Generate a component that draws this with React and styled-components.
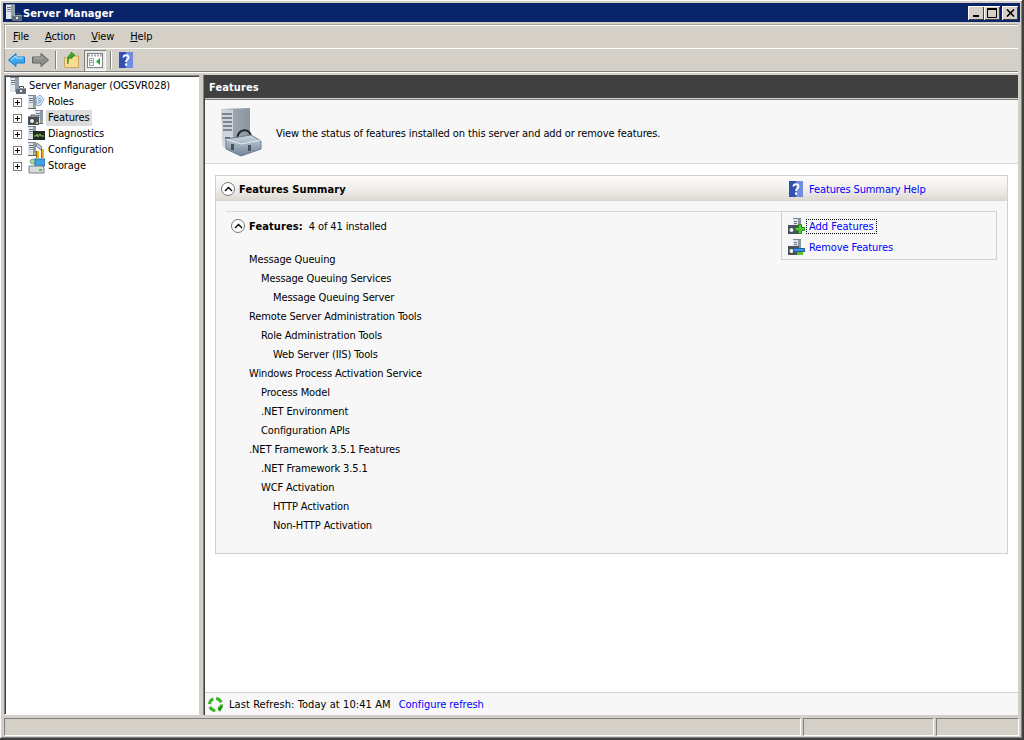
import React from 'react';
import styled, { createGlobalStyle } from 'styled-components';

const FONT = `"DejaVu Sans Condensed", "DejaVu Sans", sans-serif`;

const GlobalStyle = createGlobalStyle`
	html, body {
		margin: 0;
		padding: 0;
		background: #d4d0c8;
	}
	body {
		font-family: ${FONT};
		font-size: 11px;
		letter-spacing: -0.12px;
		color: #000;
	}
	strong {
		letter-spacing: 0.1px;
	}
`;

const treeItems = [
	{ label: 'Roles', icon: 'roles' },
	{ label: 'Features', icon: 'features', selected: true },
	{ label: 'Diagnostics', icon: 'diagnostics' },
	{ label: 'Configuration', icon: 'configuration' },
	{ label: 'Storage', icon: 'storage' },
];

const featureRows = [
	['Message Queuing', 0],
	['Message Queuing Services', 1],
	['Message Queuing Server', 2],
	['Remote Server Administration Tools', 0],
	['Role Administration Tools', 1],
	['Web Server (IIS) Tools', 2],
	['Windows Process Activation Service', 0],
	['Process Model', 1],
	['.NET Environment', 1],
	['Configuration APIs', 1],
	['.NET Framework 3.5.1 Features', 0],
	['.NET Framework 3.5.1', 1],
	['WCF Activation', 1],
	['HTTP Activation', 2],
	['Non-HTTP Activation', 2],
];

// small server tower used by most of the tree icons
const Tower = ({ x = 0, y = 0 }) => (
	<g transform={`translate(${x} ${y})`}>
		<rect x='0' y='0' width='8' height='14' fill='#dfe5ea' />
		<rect x='5' y='1' width='3' height='13' fill='#8d99a5' />
		<rect x='0' y='0' width='8' height='1' fill='#7b8794' />
		<rect x='1' y='3' width='4' height='1' fill='#6b7785' />
		<rect x='1' y='5' width='4' height='1' fill='#6b7785' />
		<rect x='1' y='7' width='4' height='1' fill='#9aa5b0' />
		<rect x='0' y='13' width='8' height='1' fill='#5e6975' />
		<rect x='6' y='11' width='2' height='1' fill='#a6e022' />
	</g>
);

const ItemIcon = ({ name }) => {
	if (name === 'roles') {
		return (
			<svg width='17' height='16' viewBox='0 0 17 16'>
				<Tower y='1' />
				<path d='M8 4 L12 1 L16 5 L13 11 L9 12 Z' fill='#dbe9fa' stroke='#8fb0d9' />
				<path d='M10 5 L13 4 M10 7 L14 6 M10 9 L13 8' stroke='#7ea0cc' />
			</svg>
		);
	}
	if (name === 'features') {
		return (
			<svg width='17' height='16' viewBox='0 0 17 16'>
				<Tower x='7' y='0' />
				<path d='M3 6.5 V5 H7 V6.5' fill='none' stroke='#3a424a' />
				<rect x='0' y='6' width='11' height='9' fill='#48525c' />
				<rect x='0' y='6' width='11' height='1' fill='#7f8a95' />
				<circle cx='4' cy='11' r='2.5' fill='#f0f0f0' stroke='#2e343a' />
				<rect x='8' y='12' width='2' height='2' fill='#d8c24a' />
			</svg>
		);
	}
	if (name === 'diagnostics') {
		return (
			<svg width='17' height='16' viewBox='0 0 17 16'>
				<Tower y='0' />
				<rect x='5' y='5' width='12' height='9' fill='#1f2a24' />
				<path d='M6 10 L8 10 L9 8 L10 11 L12 8 L13 10 L16 10' fill='none' stroke='#8fd14f' />
			</svg>
		);
	}
	if (name === 'configuration') {
		return (
			<svg width='17' height='17' viewBox='0 0 17 17'>
				<Tower y='0' />
				<path d='M9 1 L14 5 L13 8 L8 4 Z' fill='#c2ccd6' stroke='#75808b' />
				<rect x='8' y='9' width='3' height='7' fill='#f2b01e' />
				<rect x='13' y='7' width='3' height='9' fill='#f2b01e' />
				<path d='M8.5 9 V16 M13.5 7 V16' stroke='#9a6206' />
			</svg>
		);
	}
	return (
		<svg width='17' height='16' viewBox='0 0 17 16'>
			<ellipse cx='6' cy='3.5' rx='4' ry='2.5' fill='#a8dca0' stroke='#78a874' />
			<rect x='7' y='1' width='10' height='7' fill='#3fa0e6' stroke='#2a6fa8' />
			<path d='M1 8 H15 L16 11 V15 H1 V11 Z' fill='#d8dcdf' stroke='#7a8087' />
			<rect x='11' y='11' width='3' height='2' fill='#58c322' />
		</svg>
	);
};

const ServerManagerIcon = () => (
	<svg width='17' height='17' viewBox='0 0 17 17'>
		<rect x='1' y='0' width='9' height='15' fill='#e3e8ed' />
		<rect x='6' y='1' width='4' height='14' fill='#94a0ac' />
		<rect x='1' y='0' width='9' height='1' fill='#7b8794' />
		<rect x='2' y='3' width='4' height='1' fill='#6b7785' />
		<rect x='2' y='5' width='4' height='1' fill='#6b7785' />
		<rect x='2' y='7' width='4' height='1' fill='#9aa5b0' />
		<path d='M10.5 11 V9.5 H14.5 V11' fill='none' stroke='#3d454d' />
		<rect x='7' y='11' width='10' height='6' fill='#5f6b77' />
		<rect x='7' y='11' width='10' height='1' fill='#8d98a3' />
		<rect x='11' y='13' width='2' height='2' fill='#e6e6e6' />
	</svg>
);

const HelpIcon = () => (
	<svg width='14' height='16' viewBox='0 0 14 16'>
		<rect x='0' y='0' width='14' height='16' fill='#3350b0' />
		<rect x='7' y='0' width='7' height='16' fill='#6f8ce0' />
		<path d='M4.5 5.5 C4.5 2.5 9.5 2.5 9.5 5.5 C9.5 7.5 7 7.5 7 10' fill='none' stroke='#fff' strokeWidth='1.8' />
		<rect x='6' y='11.5' width='2.2' height='2.2' fill='#fff' />
	</svg>
);

const ArrowBack = () => (
	<svg width='17' height='16' viewBox='0 0 17 16'>
		<path d='M0.5 8 L8 1.5 V5 H16.5 V11 H8 V14.5 Z' fill='#3fa6f0' stroke='#1a7ccf' />
		<path d='M3 8 L8 4 V6 H15' fill='none' stroke='#c8eafc' />
	</svg>
);

const ArrowForward = () => (
	<svg width='17' height='16' viewBox='0 0 17 16'>
		<path d='M16.5 8 L9 1.5 V5 H0.5 V11 H9 V14.5 Z' fill='#8e8e8a' stroke='#5e5e5b' />
		<path d='M2 6 H10 V4' fill='none' stroke='#b8b8b4' />
	</svg>
);

const UpFolderIcon = () => (
	<svg width='15' height='16' viewBox='0 0 15 16'>
		<path d='M0.5 5.5 H4 L5 4 H14.5 V15.5 H0.5 Z' fill='#f8dc90' stroke='#c4a860' />
		<path d='M4 12 C4 8 5 6 7 5 V7 L11 3 L7 0 V2 C4 3 2.5 7 4 12 Z' fill='#35a829' stroke='#23801a' strokeWidth='0.6' />
	</svg>
);

const ConsoleTreeIcon = () => (
	<svg width='16' height='15' viewBox='0 0 16 15'>
		<rect x='0.5' y='0.5' width='15' height='14' fill='#fff' stroke='#7a828b' />
		<path d='M1 2.5 H15' stroke='#a2abb4' strokeWidth='2' strokeDasharray='2 1' />
		<path d='M2.5 5.5 H6.5 V12.5 H2.5 Z' fill='#f6f7f8' stroke='#9aa3ac' />
		<path d='M3.5 7.5 H5.5 M3.5 9.5 H5.5' stroke='#7a828b' />
		<path d='M13 5 L9 8.5 L13 12 Z' fill='#20a83c' />
	</svg>
);

const BigServerIcon = () => (
	<svg width='44' height='50' viewBox='0 0 44 50'>
		<defs>
			<linearGradient id='towerSide' x1='0' y1='0' x2='1' y2='0'>
				<stop offset='0' stopColor='#a9b2bb' />
				<stop offset='1' stopColor='#8a95a0' />
			</linearGradient>
			<linearGradient id='boxFill' x1='0' y1='0' x2='0' y2='1'>
				<stop offset='0' stopColor='#cbd8e3' />
				<stop offset='1' stopColor='#6e8195' />
			</linearGradient>
		</defs>
		<path d='M0 2 L29 1 V36 L12 42 L2 40 Z' fill='url(#towerSide)' />
		<path d='M0 2 L12 3 V42 L2 40 Z' fill='#cfd5db' />
		<path d='M1 7 H11 M1 11 H11 M2 15 H11 M2 19 H11 M2 23 H11' stroke='#626c76' strokeWidth='1.5' />
		<rect x='4' y='30' width='5' height='2' fill='#5a636c' />
		<path d='M16 31 C18 21 28 21 30 29' fill='none' stroke='#1f262d' strokeWidth='2' />
		<path d='M5 32 L30 28 L40 34 L40 42 L20 49 L5 42 Z' fill='url(#boxFill)' stroke='#6c7d8e' />
		<path d='M5 32 L20 37 L40 33' fill='none' stroke='#e8eff5' />
		<rect x='10' y='37' width='3' height='6' fill='#46535f' />
		<rect x='27' y='38' width='3' height='6' fill='#46535f' />
	</svg>
);

const TaskIcon = ({ remove }) => (
	<svg width='17' height='17' viewBox='0 0 17 17'>
		<rect x='5' y='0' width='8' height='9' fill='#dfe5ea' />
		<rect x='10' y='1' width='3' height='8' fill='#8d99a5' />
		<rect x='5' y='0' width='8' height='1' fill='#7b8794' />
		<rect x='6' y='3' width='3' height='1' fill='#6b7785' />
		<rect x='6' y='5' width='3' height='1' fill='#6b7785' />
		<rect x='0' y='7' width='11' height='9' fill='#48525c' />
		<circle cx='3.5' cy='12' r='2' fill='#eee' />
		{remove ? (
			<g>
				<rect x='5.5' y='9.5' width='11' height='3' fill='#3f93e0' stroke='#1e5f9e' />
				<rect x='9' y='13' width='6' height='3' fill='#58c322' />
			</g>
		) : (
			<path d='M10.5 6.5 H13.5 V9.5 H16.5 V12.5 H13.5 V15.5 H10.5 V12.5 H7.5 V9.5 H10.5 Z' fill='#52cc30' stroke='#2b8a1a' />
		)}
	</svg>
);

const RefreshIcon = () => (
	<svg width='17' height='17' viewBox='0 0 17 17'>
		<circle cx='8.5' cy='8.5' r='6' fill='none' stroke='#3fb52a' strokeWidth='3' strokeDasharray='6.5 2.9' />
		<path d='M11 11 L16 10 L13 16 Z' fill='#23901a' />
	</svg>
);

const Collapse = () => (
	<CollapseButton>
		<svg width='9' height='6' viewBox='0 0 9 6'>
			<path d='M1 5 L4.5 1.5 L8 5' fill='none' stroke='#000' strokeWidth='1.4' />
		</svg>
	</CollapseButton>
);

const App = () => (
	<Window>
		<GlobalStyle />
		<TitleBar>
			<TitleLabel>
				<ServerManagerIcon />
				<span>Server Manager</span>
			</TitleLabel>
			<CaptionButtons>
				<CaptionButton>
					<svg width='9' height='9' viewBox='0 0 9 9'><rect x='1' y='7' width='6' height='2' fill='#000' /></svg>
				</CaptionButton>
				<CaptionButton>
					<svg width='10' height='10' viewBox='0 0 10 10'><path d='M0.5 1.5 H9.5 V9.5 H0.5 Z' fill='none' stroke='#000' /><rect y='0' width='10' height='2' fill='#000' /></svg>
				</CaptionButton>
				<CaptionButton $close>
					<svg width='9' height='8' viewBox='0 0 9 8'><path d='M1 0.5 L8 7.5 M8 0.5 L1 7.5' stroke='#000' strokeWidth='1.6' /></svg>
				</CaptionButton>
			</CaptionButtons>
		</TitleBar>

		<MenuBar>
			<MenuItem><u>F</u>ile</MenuItem>
			<MenuItem><u>A</u>ction</MenuItem>
			<MenuItem><u>V</u>iew</MenuItem>
			<MenuItem><u>H</u>elp</MenuItem>
		</MenuBar>

		<ToolBar>
			<ToolButton><ArrowBack /></ToolButton>
			<ToolButton><ArrowForward /></ToolButton>
			<ToolSeparator />
			<ToolButton><UpFolderIcon /></ToolButton>
			<ToolButton $pressed><ConsoleTreeIcon /></ToolButton>
			<ToolSeparator />
			<ToolButton><HelpIcon /></ToolButton>
		</ToolBar>

		<Body>
			<TreePane>
				<TreeRoot>
					<ServerManagerIcon />
					<span>Server Manager (OGSVR028)</span>
				</TreeRoot>
				{treeItems.map(item => (
					<TreeRow key={item.label}>
						<Expander>
							<svg width='9' height='9' viewBox='0 0 9 9'>
								<rect x='0.5' y='0.5' width='8' height='8' fill='#fff' stroke='#808080' />
								<path d='M2 4.5 H7 M4.5 2 V7' stroke='#000' />
							</svg>
						</Expander>
						<TreeIconBox><ItemIcon name={item.icon} /></TreeIconBox>
						<TreeLabel $selected={item.selected}>{item.label}</TreeLabel>
					</TreeRow>
				))}
			</TreePane>

			<MainPane>
				<PaneHeader>Features</PaneHeader>
				<Content>
					<Intro>
						<BigServerIcon />
						<IntroText>View the status of features installed on this server and add or remove features.</IntroText>
					</Intro>
					<Scroller>
						<Section>
							<SectionHeader>
								<SectionTitle>
									<Collapse />
									<strong>Features Summary</strong>
								</SectionTitle>
								<HelpLink>
									<HelpIcon />
									<BlueLink>Features Summary Help</BlueLink>
								</HelpLink>
							</SectionHeader>
							<SectionBody>
								<SummaryColumn>
									<SummaryHead>
										<Collapse />
										<strong>Features:</strong>
										<span>4 of 41 installed</span>
									</SummaryHead>
									{featureRows.map(([label, level]) => (
										<FeatureRow key={label} $level={level}>{label}</FeatureRow>
									))}
								</SummaryColumn>
								<TaskBox>
									<TaskRow>
										<TaskIcon />
										<FocusLink>Add Features</FocusLink>
									</TaskRow>
									<TaskRow>
										<TaskIcon remove />
										<BlueLink>Remove Features</BlueLink>
									</TaskRow>
								</TaskBox>
							</SectionBody>
						</Section>
					</Scroller>
					<RefreshBar>
						<RefreshIcon />
						<span>Last Refresh: Today at 10:41 AM</span>
						<BlueLink>Configure refresh</BlueLink>
					</RefreshBar>
				</Content>
			</MainPane>
		</Body>

		<StatusBar>
			<StatusCell $flex />
			<StatusCell $width={131} />
			<StatusCell $width={83} />
		</StatusBar>
	</Window>
);

const Window = styled.div`
	width: 1024px;
	height: 740px;
	box-sizing: border-box;
	padding: 3px 2px 2px 3px;
	display: flex;
	flex-direction: column;
	overflow: hidden;
	background: #d4d0c8;
	border-right: 2px solid #404040;
	border-bottom: 2px solid #404040;
	box-shadow: inset 1px 1px 0 #fff, inset -1px -1px 0 #808080;
`;

const TitleBar = styled.div`
	height: 19px;
	flex: none;
	display: flex;
	align-items: center;
	justify-content: space-between;
	padding: 0 2px 0 2px;
	background: #0a246a;
	color: #fff;
`;

const TitleLabel = styled.div`
	display: flex;
	align-items: center;
	gap: 1px;
	font-weight: bold;
	letter-spacing: 0.1px;

	span {
		margin-top: 2px;
	}
`;

const CaptionButtons = styled.div`
	display: flex;
`;

const CaptionButton = styled.div`
	width: 16px;
	height: 14px;
	margin-left: ${props => (props.$close ? '2px' : '0')};
	display: flex;
	align-items: center;
	justify-content: center;
	background: #d4d0c8;
	box-shadow: inset 1px 1px 0 #fff, inset -1px -1px 0 #404040;
`;

const MenuBar = styled.div`
	height: 23px;
	flex: none;
	margin: 2px 2px 0 1px;
	padding: 0 0 0 1px;
	display: flex;
	align-items: center;
	border-top: 1px solid #a5a29c;
	border-left: 1px solid #a5a29c;
	box-shadow: inset 1px 1px 0 #fff;
`;

const MenuItem = styled.div`
	padding: 0 7px;
	margin-right: 2px;
`;

const ToolBar = styled.div`
	height: 22px;
	flex: none;
	margin: 0 2px 0 1px;
	display: flex;
	align-items: center;
	gap: 1px;
	border-top: 1px solid #fff;
	border-bottom: 1px solid #808080;
	border-left: 1px solid #a5a29c;
	box-shadow: 0 1px 0 #fff;
`;

const ToolButton = styled.div`
	width: 22px;
	height: 21px;
	flex: none;
	margin-right: 1px;
	display: flex;
	align-items: center;
	justify-content: center;
	background: ${props => (props.$pressed ? '#ece9e3' : 'transparent')};
	box-shadow: ${props => (props.$pressed ? 'inset 1px 1px 0 #808080, inset -1px -1px 0 #fff' : 'none')};
`;

const ToolSeparator = styled.div`
	width: 1px;
	height: 18px;
	margin: 0 3px 0 2px;
	background: #808080;
	box-shadow: 1px 0 0 #fff;
`;

const Body = styled.div`
	flex: 1;
	min-height: 0;
	display: flex;
	gap: 4px;
	margin: 3px 2px 2px 1px;
`;

const TreePane = styled.div`
	width: 196px;
	flex: none;
	box-sizing: border-box;
	padding-top: 1px;
	background: #fff;
	border-top: 1px solid #808080;
	border-left: 1px solid #808080;
	border-right: 1px solid #d4d0c8;
	border-bottom: 1px solid #fff;
	box-shadow: inset 1px 1px 0 #404040;
`;

const TreeRoot = styled.div`
	height: 17px;
	display: flex;
	align-items: center;
	gap: 3px;
	padding-left: 4px;
`;

const TreeRow = styled.div`
	height: 16px;
	display: flex;
	align-items: center;
	padding-left: 8px;
`;

const Expander = styled.div`
	width: 9px;
	height: 9px;
	display: flex;
`;

const TreeIconBox = styled.div`
	width: 17px;
	height: 16px;
	margin-left: 6px;
`;

const TreeLabel = styled.span`
	margin-left: 1px;
	padding: 0 2px;
	line-height: 16px;
	background: ${props => (props.$selected ? '#dcdcdc' : 'transparent')};
`;

const MainPane = styled.div`
	flex: 1;
	min-width: 0;
	display: flex;
	flex-direction: column;
	border-left: 1px solid #404040;
	box-shadow: -1px 0 0 #808080;
`;

const PaneHeader = styled.div`
	height: 22px;
	flex: none;
	padding: 1px 0 0 4px;
	display: flex;
	align-items: center;
	background: #404040;
	color: #fff;
	font-weight: bold;
	letter-spacing: 0.1px;
`;

const Content = styled.div`
	flex: 1;
	min-height: 0;
	margin-top: 1px;
	display: flex;
	flex-direction: column;
	background: #fff;
	border-top: 1px solid #808080;
`;

const Intro = styled.div`
	height: 64px;
	flex: none;
	box-sizing: border-box;
	padding: 7px 0 0 16px;
	display: flex;
	align-items: flex-start;
	background: #f7f7f7;
	border-bottom: 1px solid #d8d8d8;
`;

const IntroText = styled.div`
	margin: 20px 0 0 11px;
`;

const Scroller = styled.div`
	flex: 1;
	min-height: 0;
	padding: 11px 10px 0 10px;
`;

const Section = styled.div`
	height: 379px;
	box-sizing: border-box;
	display: flex;
	flex-direction: column;
	background: #f7f7f7;
	border: 1px solid #d0d0d0;
`;

const SectionHeader = styled.div`
	height: 24px;
	flex: none;
	display: flex;
	align-items: center;
	justify-content: space-between;
	padding: 1px 0 0 5px;
	background: linear-gradient(#fdfcfb, #f0eeea 55%, #dcd6d0);
`;

const SectionTitle = styled.div`
	display: flex;
	align-items: center;
	gap: 4px;
`;

const HelpLink = styled.div`
	width: 218px;
	flex: none;
	display: flex;
	align-items: center;
	gap: 6px;
`;

const BlueLink = styled.span`
	color: #0000ff;
`;

const FocusLink = styled(BlueLink)`
	margin: 0 0 0 -2px;
	padding: 0 2px;
	outline: 1px dotted #000;
	letter-spacing: 0;
`;

const SectionBody = styled.div`
	flex: 1;
	display: flex;
	align-items: flex-start;
	padding: 10px 10px 0 10px;
`;

const SummaryColumn = styled.div`
	flex: 1;
	border-top: 1px solid #d8d8d8;
	padding: 6px 0 0 5px;
`;

const SummaryHead = styled.div`
	height: 16px;
	margin-bottom: 16px;
	display: flex;
	align-items: center;
	gap: 4px;

	strong {
		margin-right: 2px;
	}
`;

const CollapseButton = styled.div`
	width: 14px;
	height: 14px;
	flex: none;
	box-sizing: border-box;
	display: flex;
	align-items: center;
	justify-content: center;
	border: 1px solid #777;
	border-radius: 50%;
	background: #fff;
`;

const FeatureRow = styled.div`
	height: 19px;
	line-height: 19px;
	padding-left: ${props => 18 + props.$level * 12}px;
`;

const TaskBox = styled.div`
	width: 216px;
	height: 49px;
	flex: none;
	box-sizing: border-box;
	padding: 4px 0 0 6px;
	border: 1px solid #d0d0d0;
`;

const TaskRow = styled.div`
	height: 21px;
	display: flex;
	align-items: center;
	gap: 4px;
`;

const RefreshBar = styled.div`
	height: 23px;
	flex: none;
	box-sizing: border-box;
	padding-left: 2px;
	display: flex;
	align-items: center;
	gap: 5px;
	background: #f7f7f7;
	border-top: 1px solid #d0d0d0;
	letter-spacing: 0.08px;

	${BlueLink} {
		margin-left: 3px;
		letter-spacing: -0.04px;
	}
`;

const StatusBar = styled.div`
	height: 18px;
	flex: none;
	margin: 0 1px;
	display: flex;
	gap: 2px;
	padding-top: 1px;
`;

const StatusCell = styled.div`
	flex: ${props => (props.$flex ? 1 : 'none')};
	width: ${props => (props.$width ? `${props.$width}px` : 'auto')};
	box-sizing: border-box;
	height: 18px;
	border-top: 1px solid #808080;
	border-left: 1px solid #808080;
	border-right: 1px solid #fff;
	border-bottom: 1px solid #fff;
`;

export default App;
